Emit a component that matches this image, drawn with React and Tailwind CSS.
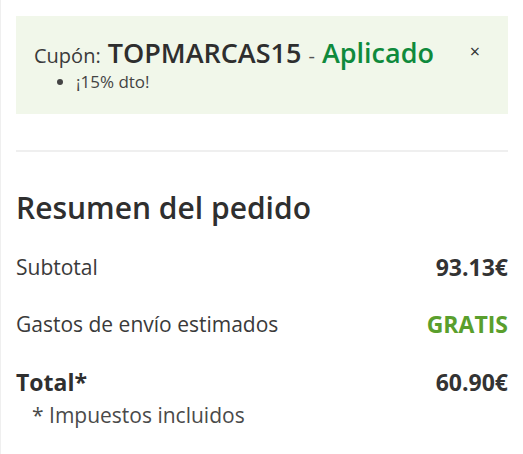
export default function App() {
  return (
    <div
      className="min-h-[454px] bg-white border-l border-[#efefef] pl-[15px] pr-[15px] pt-4 text-[#333]"
      style={{ fontFamily: '"Open Sans", "Liberation Sans", sans-serif' }}
    >
      <div className="bg-[#f1f7ea] pl-[18px] pr-[28px] pt-[22px] pb-[22px]">
        <div className="flex items-center justify-between">
          <p className="text-[27px] leading-[30px] font-semibold text-[#2e2e2e] whitespace-nowrap">
            <span className="text-[20px] leading-none font-normal text-[#3a3a3a]">Cupón:</span>{" "}
            TOPMARCAS15{" "}
            <span className="text-[20px] leading-none font-normal text-[#555]">-</span>{" "}
            <span className="text-[#0f8a3c]">Aplicado</span>
          </p>
          <button className="text-[18px] leading-none text-[#333] -mt-1">×</button>
        </div>
        <ul className="mt-[4px] list-disc pl-[42px] text-[17px] leading-[20px] text-[#444]">
          <li>¡15% dto!</li>
        </ul>
      </div>

      <div className="mt-[36px] h-[2px] bg-[#efefef]" />

      <h2 className="mt-[38px] text-[30px] leading-[36px] font-semibold text-[#2f2f2f]">
        Resumen del pedido
      </h2>

      <div className="mt-[27px] flex items-center justify-between leading-[28px]">
        <span className="text-[21px] text-[#3a3a3a]">Subtotal</span>
        <span className="text-[23px] font-bold text-[#333]">93.13€</span>
      </div>
      <div className="mt-[29px] flex items-center justify-between leading-[28px]">
        <span className="text-[21px] text-[#3a3a3a]">Gastos de envío estimados</span>
        <span className="text-[23px] font-bold text-[#5a9f2d]">GRATIS</span>
      </div>
      <div className="mt-[30px] flex items-center justify-between leading-[28px]">
        <span className="text-[23px] font-bold text-[#2f2f2f]">Total*</span>
        <span className="text-[23px] font-bold text-[#333]">60.90€</span>
      </div>
      <p className="mt-[7px] pl-[16px] text-[21px] leading-[24px] text-[#4a4a4a]">
        * Impuestos incluidos
      </p>
    </div>
  );
}
